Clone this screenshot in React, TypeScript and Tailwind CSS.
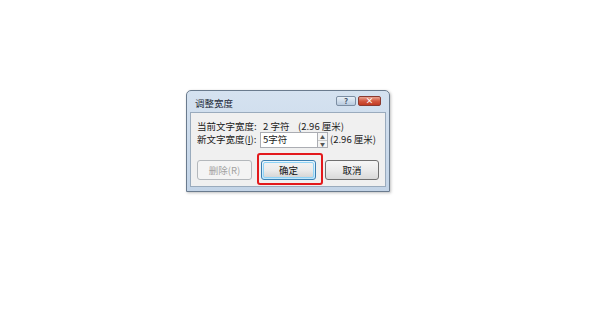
const font = { fontFamily: '"Noto Sans CJK SC", "Liberation Sans", sans-serif' };

const Btn = ({ label, kind }: { label: string; kind?: "default" | "disabled" }) => {
  if (kind === "disabled")
    return (
      <div className="w-[55px] h-[20px] rounded-[3px] border border-[#b4b8bc] bg-[#f4f4f4] flex items-center justify-center text-[9.5px] text-[#a2a2a2]">
        {label}
      </div>
    );
  if (kind === "default")
    return (
      <div className="w-[55px] h-[20px] rounded-[3px] border border-[#3c7fb1] bg-gradient-to-b from-[#eaf6fd] to-[#bee6fd] p-[1px]">
        <div className="w-full h-full rounded-[2px] border border-[#8fd3f6] bg-gradient-to-b from-[#f2f2f2] via-[#ebebeb] to-[#d6d6d6] flex items-center justify-center text-[9.5px] text-[#111]">
          {label}
        </div>
      </div>
    );
  return (
    <div className="w-[54px] h-[20px] rounded-[3px] border border-[#707070] bg-gradient-to-b from-[#f6f6f6] via-[#ebebeb] to-[#d9d9d9] flex items-center justify-center text-[9.5px] text-[#111]">
      {label}
    </div>
  );
};

export default function App() {
  return (
    <div className="min-h-screen bg-white pt-[90px] pl-[186px]" style={font}>
      <div className="w-[204px] h-[102px] rounded-t-[5px] border border-[#6a7b8e] bg-gradient-to-b from-[#d5e2f0] to-[#c3d4e7] flex flex-col px-[3px] pb-[4px] shadow-[1px_1px_3px_rgba(0,0,0,0.25)]">
        <div className="h-[21px] flex items-start">
          <span className="pl-[5px] mt-[6px] text-[9.5px] leading-[12px] text-[#1e2a38]">调整宽度</span>
          <div className="ml-auto mt-[5px] mr-[5px] flex gap-[2px]">
            <div className="w-[20px] h-[10px] rounded-[2px] border border-[#7c8ea3] bg-gradient-to-b from-[#e8f0f8] to-[#b8cade] flex items-center justify-center text-[8px] leading-none font-bold text-[#4b5c70]">
              ?
            </div>
            <div className="w-[23px] h-[10px] rounded-[2px] border border-[#8a3a30] bg-gradient-to-b from-[#e8a493] via-[#d2573f] to-[#c23a22] flex items-center justify-center text-[8px] leading-none font-bold text-white">
              ×
            </div>
          </div>
        </div>
        <div className="flex-1 bg-[#f0f0f0] border border-[#9aabbd] pt-[8px] pl-[6px] text-[9.5px] text-[#1a1a1a]">
          <div className="h-[11px] flex items-center leading-none">
            <span className="w-[66px]">当前文字宽度:</span>
            <span className="w-[35px]">2 字符</span>
            <span>(2.96 厘米)</span>
          </div>
          <div className="h-[16px] flex items-center leading-none">
            <span className="w-[63px]">
              新文字宽度(<span className="underline">I</span>):
            </span>
            <div className="w-[58px] h-[16px] border border-[#abadb3] bg-white flex items-center pl-[2px]">5字符</div>
            <div className="w-[10px] h-[16px] border border-l-0 border-[#abadb3] bg-[#f4f4f4] flex flex-col">
              <div className="flex-1 flex items-center justify-center text-[5px] text-[#555] leading-none border-b border-[#c8c8c8]">▲</div>
              <div className="flex-1 flex items-center justify-center text-[5px] text-[#555] leading-none">▼</div>
            </div>
            <span className="ml-[2px]">(2.96 厘米)</span>
          </div>
          <div className="mt-[12px] flex gap-[9px]">
            <Btn label="删除(R)" kind="disabled" />
            <div className="relative">
              <Btn label="确定" kind="default" />
              <span className="absolute -left-[4px] -right-[7px] -top-[7px] -bottom-[5px] border-2 border-[#e3191c] rounded-[3px]" />
            </div>
            <Btn label="取消" />
          </div>
        </div>
      </div>
    </div>
  );
}
